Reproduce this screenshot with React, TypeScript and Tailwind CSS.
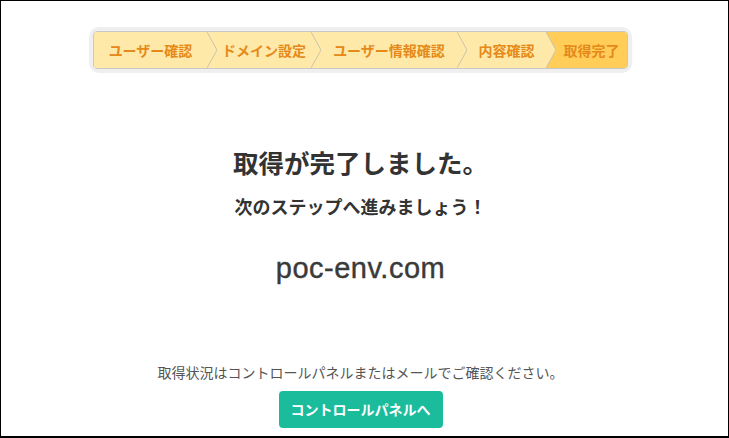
import React from "react";

const jp = { fontFamily: '"Noto Sans CJK JP", "Noto Sans", sans-serif' };

function Chevron({ right }: { right: string }) {
  return (
    <svg width="10" height="36" viewBox="0 0 10 36" className="block shrink-0">
      <rect x="0" y="0" width="10" height="36" fill="#ffe9a8" />
      <polygon points="0,0 10,0 10,36 0,36 10,18" fill={right} />
      <polyline points="0,0 10,18 0,36" fill="none" stroke="#cbc3ab" strokeWidth="1" />
    </svg>
  );
}

function Seg({ w, label, last }: { w: string; label: string; last?: boolean }) {
  return (
    <div
      className={`${w} h-[36px] flex items-center justify-center text-[14px] font-bold text-[#e5891a] ${
        last ? "bg-[#ffcd58]" : "bg-[#ffe9a8]"
      }`}
    >
      {label}
    </div>
  );
}

export default function App() {
  return (
    <div
      className="w-[729px] h-[438px] border-t border-l border-r border-b-[2px] border-black bg-white flex flex-col items-center pr-[8px] box-border overflow-hidden"
      style={jp}
    >
      <div className="mt-[30px] rounded-[6px] shadow-[0_0_0_4px_#efefef]">
        <div className="flex border border-[#c8c8c8] rounded-[4px] overflow-hidden w-[535px]">
          <Seg w="w-[113px]" label="ユーザー確認" />
          <Chevron right="#ffe9a8" />
          <Seg w="w-[94px]" label="ドメイン設定" />
          <Chevron right="#ffe9a8" />
          <Seg w="w-[136px]" label="ユーザー情報確認" />
          <Chevron right="#ffe9a8" />
          <Seg w="w-[79px]" label="内容確認" />
          <Chevron right="#ffcd58" />
          <Seg w="w-[71px]" label="取得完了" last />
        </div>
      </div>

      <div className="mt-[76px] h-[34px] leading-[34px] text-[25.5px] font-bold text-[#333]">
        取得が完了しました。
      </div>
      <div className="mt-[15px] h-[24px] leading-[24px] text-[18px] font-bold text-[#333]">
        次のステップへ進みましょう！
      </div>
      <div
        className="mt-[32px] h-[36px] leading-[36px] text-[29px] tracking-[0.5px] text-[#3a3a3a]"
        style={{ fontFamily: '"Liberation Sans", Arial, sans-serif', WebkitTextStroke: "0.4px #3a3a3a" }}
      >
        poc-env.com
      </div>
      <div className="mt-[76px] h-[20px] leading-[20px] text-[14px] text-[#555]">
        取得状況はコントロールパネルまたはメールでご確認ください。
      </div>
      <button className="mt-[9px] w-[164px] h-[37px] rounded-[4px] bg-[#1abc9c] text-white text-[14px] font-bold flex items-center justify-center">
        コントロールパネルへ
      </button>
    </div>
  );
}
